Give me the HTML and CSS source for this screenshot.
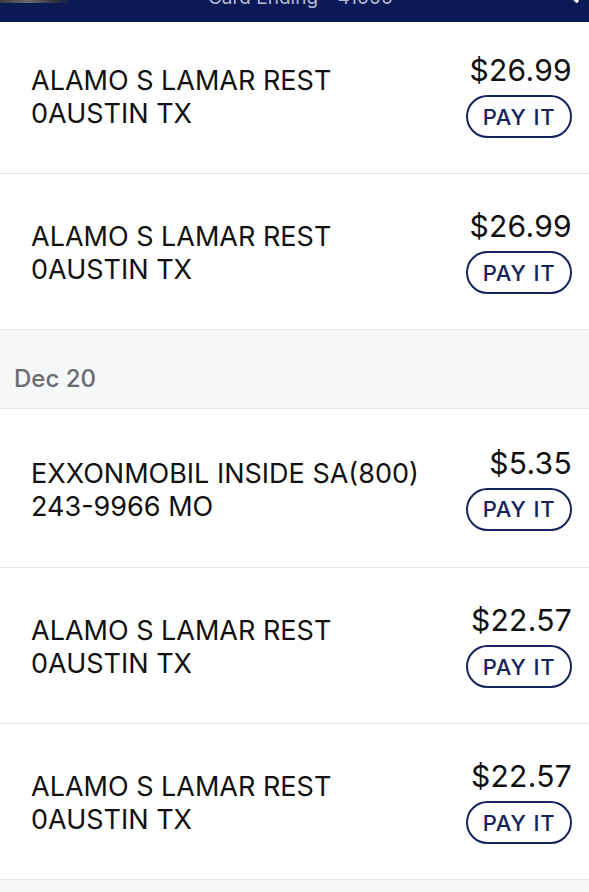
FILE: index.html
```html
<!DOCTYPE html>
<html>
<head>
<meta charset="utf-8">
<link rel="stylesheet" href="styles.css">
</head>
<body>
<header class="topbar">
  <div class="topbar-thumb"></div>
  <div class="topbar-title">Card Ending - 41000</div>
  <div class="topbar-icon"></div>
</header>
<main class="list">
  <div class="txn">
    <div class="txn-name">ALAMO S LAMAR REST<br>0AUSTIN TX</div>
    <div class="txn-side">
      <div class="txn-amount">$26.99</div>
      <button class="pay-btn">PAY IT</button>
    </div>
  </div>
  <div class="txn">
    <div class="txn-name">ALAMO S LAMAR REST<br>0AUSTIN TX</div>
    <div class="txn-side">
      <div class="txn-amount">$26.99</div>
      <button class="pay-btn">PAY IT</button>
    </div>
  </div>
  <div class="date-head">Dec 20</div>
  <div class="txn txn-tall">
    <div class="txn-name">EXXONMOBIL INSIDE SA(800)<br>243-9966 MO</div>
    <div class="txn-side">
      <div class="txn-amount">$5.35</div>
      <button class="pay-btn">PAY IT</button>
    </div>
  </div>
  <div class="txn">
    <div class="txn-name">ALAMO S LAMAR REST<br>0AUSTIN TX</div>
    <div class="txn-side">
      <div class="txn-amount">$22.57</div>
      <button class="pay-btn">PAY IT</button>
    </div>
  </div>
  <div class="txn">
    <div class="txn-name">ALAMO S LAMAR REST<br>0AUSTIN TX</div>
    <div class="txn-side">
      <div class="txn-amount">$22.57</div>
      <button class="pay-btn">PAY IT</button>
    </div>
  </div>
  <div class="list-end"></div>
</main>
</body>
</html>
```
FILE: styles.css
```css
html, body {
  margin: 0;
  padding: 0;
  background: #ffffff;
}
body {
  width: 589px;
  height: 892px;
  overflow: hidden;
  font-family: Inter, "Liberation Sans", Arial, sans-serif;
  color: #111111;
}
.topbar {
  position: fixed;
  top: 0;
  left: 0;
  width: 589px;
  height: 22px;
  background: #0b1a57;
  overflow: hidden;
  z-index: 2;
}
.topbar-title {
  text-align: center;
  color: #b4b9cf;
  font-size: 19px;
  line-height: 20px;
  margin-top: -12px;
  padding-left: 12px;
}
.topbar-thumb {
  position: absolute;
  left: 0;
  top: 0;
  width: 72px;
  height: 3px;
  background: linear-gradient(90deg, #3a3a3a, #6a6a6a 40%, #2c2c3a 80%, #0b1a57);
}
.topbar-icon {
  position: absolute;
  right: 11px;
  top: -3px;
  width: 4px;
  height: 6px;
  background: #ffffff;
  border-radius: 2px;
  transform: rotate(-40deg);
}
.list {
  margin-top: 18px;
}
.txn {
  display: flex;
  align-items: center;
  justify-content: space-between;
  height: 155px;
  border-bottom: 1px solid #e8e8ea;
  padding: 0 17px 0 31px;
}
.txn-tall {
  height: 158px;
}
.txn-name {
  font-size: 27px;
  line-height: 33px;
  color: #111111;
  padding-top: 3px;
}
.txn-side {
  display: flex;
  flex-direction: column;
  align-items: flex-end;
  gap: 8px;
}
.txn-amount {
  font-size: 30px;
  line-height: 34px;
  letter-spacing: 0.3px;
  color: #111111;
}
.pay-btn {
  box-sizing: border-box;
  width: 106px;
  height: 43px;
  border: 2px solid #14245c;
  border-radius: 22px;
  background: #ffffff;
  color: #14245c;
  font-family: Inter, "Liberation Sans", Arial, sans-serif;
  font-size: 22px;
  font-weight: 500;
  letter-spacing: 0.8px;
  padding: 0;
  display: flex;
  align-items: center;
  justify-content: center;
}
.date-head {
  height: 79px;
  background: #f6f7f9;
  border-bottom: 1px solid #e8e8ea;
  padding-left: 14px;
  box-sizing: border-box;
  padding-top: 34px;
  font-size: 24px;
  line-height: 30px;
  font-weight: 500;
  color: #6b6b70;
}
.list-end {
  height: 12px;
  background: #f6f7f9;
}
```
